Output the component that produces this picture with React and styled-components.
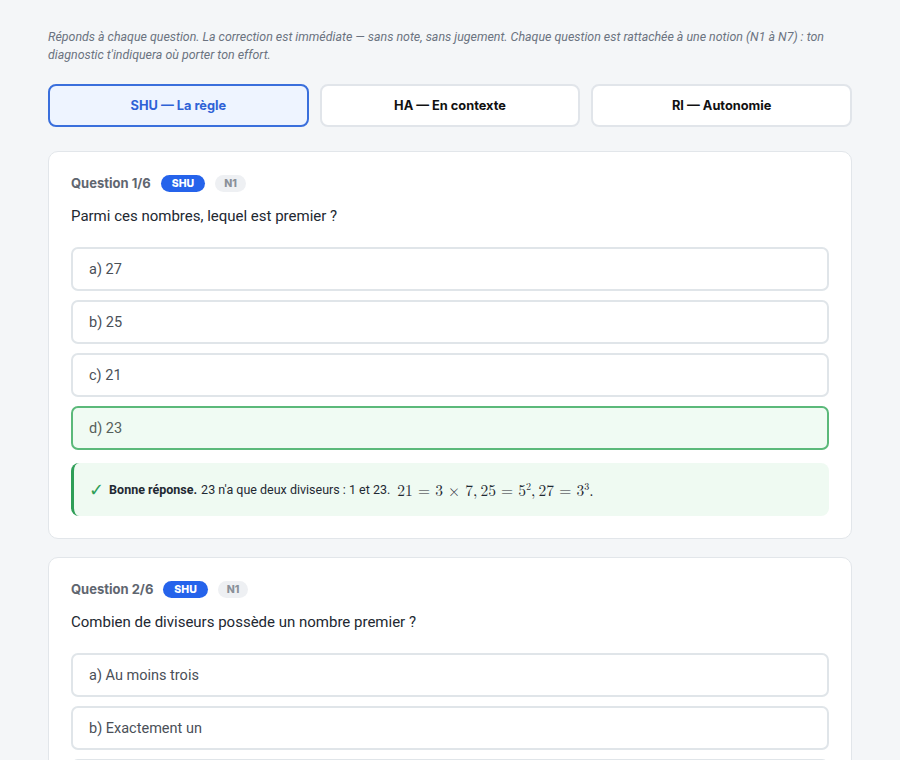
import React from 'react';
import styled, { createGlobalStyle } from 'styled-components';

const GlobalStyle = createGlobalStyle`
  html, body {
    margin: 0;
    padding: 0;
    background: #f4f6f8;
  }
  body {
    font-family: Roboto, "Liberation Sans", sans-serif;
    color: #1f2933;
  }
`;

const Page = styled.div`
  width: 804px;
  margin: 0 auto;
  padding: 28px 0 40px;
`;

const Intro = styled.p`
  margin: 0 0 20px;
  font-style: italic;
  font-size: 12.4px;
  line-height: 18px;
  color: #6b7380;
`;

const Tabs = styled.div`
  display: grid;
  grid-template-columns: repeat(3, 1fr);
  gap: 11px;
  margin-bottom: 24px;
`;

const Tab = styled.button`
  height: 43px;
  border-radius: 8px;
  border: 2px solid ${p => (p.$active ? '#3a6fdc' : '#e1e5ea')};
  background: ${p => (p.$active ? '#eef4ff' : '#ffffff')};
  color: ${p => (p.$active ? '#2f62d6' : '#111111')};
  font-family: Inter, "Open Sans", sans-serif;
  font-weight: 700;
  font-size: 12.8px;
  cursor: pointer;
`;

const Card = styled.section`
  background: #ffffff;
  border: 1px solid #e2e6ea;
  border-radius: 10px;
  padding: 22px;
  margin-bottom: 18px;
`;

const Meta = styled.div`
  display: flex;
  align-items: center;
  gap: 10px;
  height: 18px;
`;

const MetaLabel = styled.span`
  font-family: Inter, "Open Sans", sans-serif;
  font-weight: 700;
  font-size: 13px;
  color: #5f6670;
`;

const Badge = styled.span`
  display: inline-flex;
  align-items: center;
  justify-content: center;
  height: 17px;
  padding: 0 ${p => (p.$kind === 'level' ? '9px' : '11px')};
  border-radius: 9px;
  font-family: Inter, "Open Sans", sans-serif;
  font-weight: 800;
  font-size: 10.5px;
  background: ${p => (p.$kind === 'level' ? '#eef0f3' : '#2563eb')};
  color: ${p => (p.$kind === 'level' ? '#8a9099' : '#ffffff')};
`;

const Prompt = styled.h3`
  margin: 14px 0 21px;
  font-weight: 400;
  font-size: 15px;
  line-height: 20px;
  color: #222831;
`;

const Options = styled.div`
  display: flex;
  flex-direction: column;
  gap: 9px;
`;

const Option = styled.button`
  height: 44px;
  text-align: left;
  padding: 0 16px;
  border-radius: 7px;
  border: 2px solid ${p => (p.$correct ? '#5bb97a' : '#e0e5e9')};
  background: ${p => (p.$correct ? '#f0fbf3' : '#ffffff')};
  font-family: Roboto, "Liberation Sans", sans-serif;
  font-size: 14.5px;
  color: ${p => (p.$correct ? '#56605a' : '#4a5058')};
  cursor: pointer;
`;

const Feedback = styled.div`
  display: flex;
  align-items: center;
  gap: 4px;
  margin-top: 13px;
  height: 53px;
  padding: 0 15px;
  background: #effaf2;
  border-left: 3px solid #2e9e57;
  border-radius: 8px;
  font-size: 12.5px;
  color: #1f2933;
`;

const Check = styled.span`
  color: #2e9e57;
  font-family: "DejaVu Sans", sans-serif;
  font-weight: 700;
  font-size: 18px;
  margin-right: 1px;
`;

const Strong = styled.strong`
  font-weight: 700;
`;

const Math = styled.span`
  font-family: "Latin Modern Roman", "DejaVu Serif", "Liberation Serif", serif;
  font-size: 15.5px;
  margin-left: 3px;
  sup {
    font-size: 10px;
    vertical-align: 6px;
  }
`;

const questions = [
  {
    n: 1,
    prompt: 'Parmi ces nombres, lequel est premier ?',
    options: ['a) 27', 'b) 25', 'c) 21', 'd) 23'],
    correct: 3,
    feedback: true,
  },
  {
    n: 2,
    prompt: 'Combien de diviseurs possède un nombre premier ?',
    options: ['a) Au moins trois', 'b) Exactement un', 'c) Exactement deux', 'd) Aucun'],
  },
];

function QuestionCard({ q }) {
  return (
    <Card>
      <Meta>
        <MetaLabel>Question {q.n}/6</MetaLabel>
        <Badge>SHU</Badge>
        <Badge $kind="level">N1</Badge>
      </Meta>
      <Prompt>{q.prompt}</Prompt>
      <Options>
        {q.options.map((o, i) => (
          <Option key={o} $correct={i === q.correct}>{o}</Option>
        ))}
      </Options>
      {q.feedback && (
        <Feedback>
          <Check>✓</Check>
          <Strong>Bonne réponse.</Strong>
          <span>23 n'a que deux diviseurs : 1 et 23.</span>
          <Math>
            21 = 3 × 7,{'\u2009'}25 = 5<sup>2</sup>,{'\u2009'}27 = 3<sup>3</sup>.
          </Math>
        </Feedback>
      )}
    </Card>
  );
}

export default function App() {
  return (
    <>
      <GlobalStyle />
      <Page>
        <Intro>
          Réponds à chaque question. La correction est immédiate — sans note, sans jugement. Chaque question est rattachée à une notion (N1 à N7) : ton diagnostic t'indiquera où porter ton effort.
        </Intro>
        <Tabs>
          <Tab $active>SHU — La règle</Tab>
          <Tab>HA — En contexte</Tab>
          <Tab>RI — Autonomie</Tab>
        </Tabs>
        {questions.map(q => (
          <QuestionCard key={q.n} q={q} />
        ))}
      </Page>
    </>
  );
}
